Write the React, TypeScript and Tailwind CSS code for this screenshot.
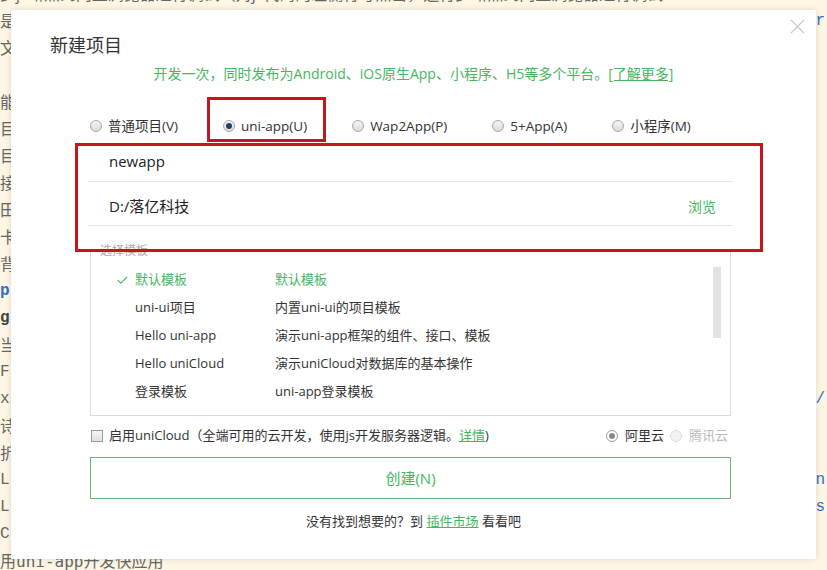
import { Check } from 'lucide-react';

const green = 'text-[#46b65f]';

// editor lines behind the modal: left fragment, right fragment
const editorLines: { left: string; leftClass?: string; right?: string; rightClass?: string }[] = [
  { left: '步js断点到内置浏览器进行调试（对js代码的左侧行号点击，运行步断点到内置浏览器进行调试' },
  { left: '是', right: 'r', rightClass: 'text-[#2f6fc4] font-mono' },
  { left: '文' },
  { left: '' },
  { left: '能' },
  { left: '目' },
  { left: '目' },
  { left: '接' },
  { left: '田' },
  { left: '卡' },
  { left: '背' },
  { left: 'p', leftClass: 'text-[#2f6fc4] font-mono font-bold' },
  { left: 'g', leftClass: 'text-[#444] font-mono font-bold' },
  { left: '当' },
  { left: 'F', leftClass: 'font-mono' },
  { left: 'xs', leftClass: 'font-mono', right: "'/", rightClass: 'text-[#2f6fc4] font-mono' },
  { left: '诗' },
  { left: '折' },
  { left: 'L', leftClass: 'font-mono', right: 'n', rightClass: 'text-[#2f6fc4] font-mono' },
  { left: 'L', leftClass: 'font-mono', right: 's', rightClass: 'text-[#2f6fc4] font-mono' },
  { left: 'C', leftClass: 'font-mono' },
];

const projectTypes = ['普通项目(V)', 'uni-app(U)', 'Wap2App(P)', '5+App(A)', '小程序(M)'];

const templates = [
  { name: '默认模板', desc: '默认模板', active: true },
  { name: 'uni-ui项目', desc: '内置uni-ui的项目模板' },
  { name: 'Hello uni-app', desc: '演示uni-app框架的组件、接口、模板' },
  { name: 'Hello uniCloud', desc: '演示uniCloud对数据库的基本操作' },
  { name: '登录模板', desc: 'uni-app登录模板' },
];

function Radio({ checked, muted }: { checked?: boolean; muted?: boolean }) {
  return (
    <span
      className={`flex h-[12px] w-[12px] flex-shrink-0 items-center justify-center rounded-full border ${
        muted ? 'border-[#ddd] bg-[#f3f3f3]' : 'border-[#a9a9a9] bg-gradient-to-b from-[#f4f4f4] to-[#dcdcdc]'
      }`}
    >
      {checked && <span className="h-[6px] w-[6px] rounded-full bg-[#1f3f6e]" />}
    </span>
  );
}

export default function App() {
  return (
    <div className="relative h-[570px] w-[827px] overflow-hidden bg-[#fdf6e4] font-['Open_Sans','Noto_Sans_CJK_SC',sans-serif]">
      {/* Editor text behind the dialog */}
      <div className="-mt-[19px] flex flex-col text-[16px] leading-[27px] text-[#666]">
        {editorLines.map((line, i) => (
          <div key={i} className="flex h-[27px] justify-between whitespace-nowrap">
            <span className={line.leftClass}>{line.left}</span>
            {line.right && <span className={`pr-[2px] ${line.rightClass}`}>{line.right}</span>}
          </div>
        ))}
        <div className="flex h-[27px] whitespace-nowrap">
          <span>用</span>
          <span className="font-['DejaVu_Sans_Mono',monospace]">uni-app</span>
          <span>开发快应用</span>
        </div>
      </div>

      {/* Dialog */}
      <div className="absolute left-[11px] top-[10px] h-[549px] w-[805px] bg-white shadow-[0_0_6px_rgba(0,0,0,0.12)]">
        <button className="absolute left-[779px] top-[9px] h-[15px] w-[15px]">
          <svg viewBox="0 0 15 15" className="h-[15px] w-[15px]">
            <path d="M1 1L14 14M14 1L1 14" stroke="#c8c8c8" strokeWidth="1.2" />
          </svg>
        </button>

        <div className="flex flex-col">
          <h1 className="ml-[39px] mt-[23px] text-[18px] leading-[24px] text-[#333]">新建项目</h1>

          <p className={`mt-[7px] text-center text-[14px] leading-[20px] ${green}`}>
            开发一次，同时发布为Android、iOS原生App、小程序、H5等多个平台。
            <span className="underline">[了解更多]</span>
          </p>

          {/* Project type */}
          <div className="ml-[79px] mt-[32px] flex h-[20px] items-center gap-[45px] text-[13.5px] text-[#333]">
            {projectTypes.map((t, i) => (
              <label key={t} className="flex items-center gap-[6px]">
                <Radio checked={i === 1} />
                <span>{t}</span>
              </label>
            ))}
          </div>

          {/* Name / location */}
          <div className="ml-[77px] w-[645px]">
            <div className="flex h-[46px] items-center border-b border-[#e4e4e4] pl-[21px] pt-[6px] text-[15px] text-[#222]">
              newapp
            </div>
            <div className="flex h-[44px] items-center justify-between border-b border-[#e4e4e4] pl-[21px] pr-[17px] pt-[6px] text-[15px] text-[#222]">
              <span>D:/落亿科技</span>
              <span className={`text-[14px] ${green}`}>浏览</span>
            </div>
          </div>

          <div className="ml-[89px] mt-[12px] h-[12px] text-[12px] leading-[26px] text-[#aaa]">选择模板</div>

          {/* Templates */}
          <div className="relative ml-[79px] h-[166px] w-[641px] border border-[#dcdcdc] pt-[15px]">
            {templates.map(t => (
              <div
                key={t.name}
                className={`flex h-[28px] items-center text-[13px] ${t.active ? green : 'text-[#333]'}`}
              >
                <span className="flex w-[44px] justify-end pr-[6px]">
                  {t.active && <Check className="h-[13px] w-[13px]" strokeWidth={2} />}
                </span>
                <span className="w-[140px]">{t.name}</span>
                <span>{t.desc}</span>
              </div>
            ))}
            <div className="absolute left-[622px] top-[16px] h-[71px] w-[8px] bg-[#e2e2e2]" />
          </div>

          {/* uniCloud */}
          <div className="ml-[80px] mt-[10px] flex h-[20px] w-[637px] items-center justify-between text-[13px] text-[#333]">
            <label className="flex items-center gap-[6px]">
              <span className="h-[12px] w-[12px] border border-[#999] bg-gradient-to-b from-[#f6f6f6] to-[#e0e0e0]" />
              <span>
                启用uniCloud（全端可用的云开发，使用js开发服务器逻辑。<span className={`underline ${green}`}>详情</span>)
              </span>
            </label>
            <div className="flex items-center">
              <label className="flex items-center gap-[7px]">
                <span className="flex h-[12px] w-[12px] items-center justify-center rounded-full border border-[#999] bg-white">
                  <span className="h-[6px] w-[6px] rounded-full bg-[#8a8a8a]" />
                </span>
                <span>阿里云</span>
              </label>
              <label className="ml-[6px] flex items-center gap-[7px] text-[#bbb]">
                <Radio muted />
                <span>腾讯云</span>
              </label>
            </div>
          </div>

          <button
            className={`ml-[79px] mt-[11px] h-[42px] w-[641px] border border-[#6fb27a] text-[15px] ${green}`}
          >
            创建(N)
          </button>

          <p className="mt-[12px] text-center text-[13px] leading-[20px] text-[#333]">
            没有找到想要的？到 <span className={`underline ${green}`}>插件市场</span> 看看吧
          </p>
        </div>

        {/* Red annotation boxes */}
        <div className="pointer-events-none absolute left-[196px] top-[87px] h-[45px] w-[119px] border-[3px] border-[#c8141a]" />
        <div className="pointer-events-none absolute left-[64px] top-[133px] h-[109px] w-[688px] border-[3px] border-[#c8141a]" />
      </div>
    </div>
  );
}
